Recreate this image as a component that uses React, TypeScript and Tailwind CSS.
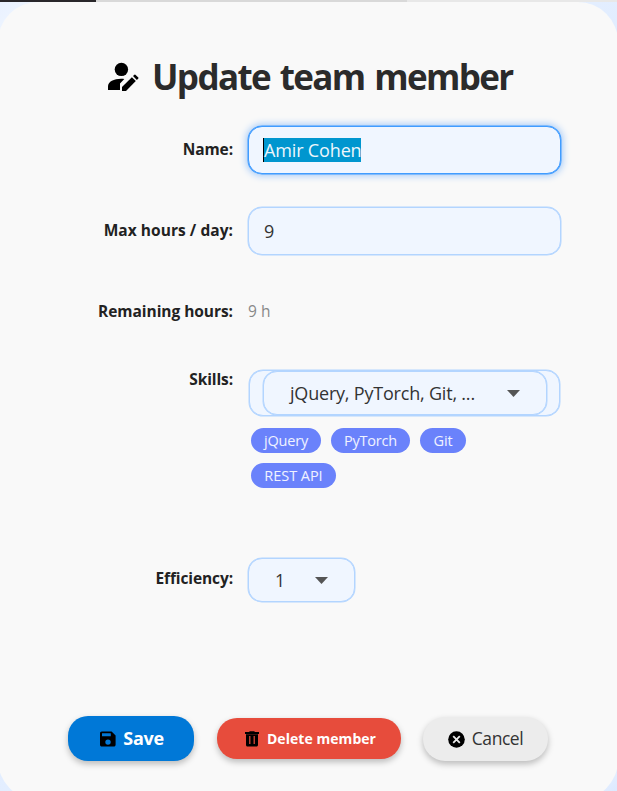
import React from "react";

function UserEditIcon() {
  return (
    <svg className="h-[32px] w-[32px] shrink-0" viewBox="0 0 32 32" fill="#000">
      <circle cx="13.4" cy="8.4" r="6.7" />
      <path d="M0 29v-3.4c0-5.2 6-7.9 13.1-7.9 1.4 0 2.3.1 3.2.3L12 22.4V29z" />
      <path d="M14 30v-4.1l9.9-9.7 3.9 3.9L18 30z" />
      <path d="M25 15.1l1.4-1.4a.7.7 0 0 1 1 0l2.9 2.9a.7.7 0 0 1 0 1l-1.4 1.4z" />
    </svg>
  );
}

function SaveIcon() {
  return (
    <svg className="h-4 w-4 shrink-0" viewBox="0 0 16 16" fill="#000">
      <path fillRule="evenodd" d="M1.8.4h9.8L15.6 4.4v9.4c0 1-.8 1.8-1.8 1.8H1.8C.8 15.6 0 14.8 0 13.8V2.2C0 1.2.8.4 1.8.4zM2 2.3v3h8.8v-3zM8 8.4a2.7 2.7 0 1 0 0 5.4 2.7 2.7 0 0 0 0-5.4z" />
    </svg>
  );
}

function TrashIcon() {
  return (
    <svg className="h-4 w-[14px] shrink-0" viewBox="0 0 14 16" fill="#000">
      <path fillRule="evenodd" d="M0 1h4l.8-.8h4.4L10 1h4v2H0zM1 3.2h12v10.9c0 .8-.7 1.5-1.5 1.5h-9c-.8 0-1.5-.7-1.5-1.5zM4.2 5v8h1.2V5zM8.6 5v8h1.2V5z" />
    </svg>
  );
}

function CancelIcon() {
  return (
    <svg className="h-[17px] w-[17px] shrink-0" viewBox="0 0 17 17">
      <circle cx="8.5" cy="8.5" r="8.3" fill="#000" />
      <path d="M5.2 5.2l6.6 6.6M11.8 5.2l-6.6 6.6" stroke="#ececec" strokeWidth="1.8" />
    </svg>
  );
}

function Caret() {
  return (
    <svg className="h-[7px] w-[13px] shrink-0" viewBox="0 0 13 7" fill="#555">
      <path d="M0 0h13L6.5 7z" />
    </svg>
  );
}

function Label({ children, className }: { children: string; className: string }) {
  return (
    <div className={`flex w-[235px] shrink-0 justify-end whitespace-nowrap text-[15.5px] font-bold text-[#222] ${className}`}>
      <span>{children}</span>
    </div>
  );
}

function Chip({ label, className }: { label: string; className: string }) {
  return (
    <span className={`flex h-[25px] items-center justify-center whitespace-nowrap rounded-full bg-[#6a82fb] text-[14.5px] text-white/90 ${className}`}>
      {label}
    </span>
  );
}

export default function App() {
  return (
    <div className="h-[791px] w-[617px] overflow-hidden bg-[linear-gradient(135deg,#e9f1ff_0%,#f2f8ff_5%,#e0ecff_50%,#f5faff_95%,#dce9ff_100%)] font-['Open_Sans','Noto_Sans',sans-serif]">
      <div className="flex h-[2px]">
        <div className="w-[96px] bg-[#29272b]" />
        <div className="w-[311px] bg-[#d9d9d9]" />
        <div className="flex-1 bg-[#e8e8e8]" />
      </div>
      <main className="-ml-[2px] flex h-[798px] w-[620px] flex-col rounded-[40px] bg-[#f9f9f9]">
        <h1 className="mt-[50px] flex h-[50px] items-center pl-[110px] text-[35px] font-bold text-[#2b2b2b]">
          <UserEditIcon />
          <span className="ml-[12px] whitespace-nowrap tracking-[-1.6px] [word-spacing:2px]">Update team member</span>
        </h1>

        <div className="mt-[24px] flex h-[48px] items-center gap-[15px]">
          <Label className="pb-px tracking-[-0.1px]">Name:</Label>
          <div className="flex h-[48px] w-[313px] items-center rounded-[14px] border border-[#409cff] bg-[#f0f6ff] pl-[14px] shadow-[0_0_0_0.5px_#409cff,0_0_7px_2px_#a6cbf8]">
            <span className="flex h-[24px] items-center whitespace-nowrap border-l border-black bg-[#0096cf] text-[18px] tracking-[-0.15px] text-[#eef7fc]">Amir Cohen</span>
          </div>
        </div>

        <div className="mt-[33px] flex h-[48px] items-center gap-[15px]">
          <Label className="pb-px tracking-[0.05px]">Max hours / day:</Label>
          <div className="flex h-[48px] w-[313px] items-center rounded-[14px] border border-[#b3d5ff] bg-[#f0f6ff] pl-[15px] text-[18px] text-[#333] shadow-[0_0_0_0.5px_#b3d5ff]">9</div>
        </div>

        <div className="mt-[44px] flex h-[26px] items-center gap-[15px]">
          <Label className="pb-px tracking-[-0.05px]">Remaining hours:</Label>
          <span className="text-[15.5px] text-[#888]">9 h</span>
        </div>

        <div className="mt-[45px] flex h-[118px] items-start gap-[15px]">
          <div className="-mt-[2px]">
            <Label className="tracking-[-0.1px]">Skills:</Label>
          </div>
          <div className="ml-px">
            <div className="flex h-[46px] w-[311px] justify-center rounded-[14px] border border-[#b3d5ff] bg-[#f0f6ff] shadow-[0_0_0_0.5px_#b3d5ff]">
              <div className="ml-px flex h-[44px] w-[284px] items-center justify-between rounded-[14px] border border-[#b3d5ff] bg-[#f0f6ff] pl-[26px] pr-[26px] text-[18px] text-[#333] shadow-[0_0_0_0.5px_#b3d5ff]">
                <span className="whitespace-nowrap tracking-[-0.2px]">jQuery, PyTorch, Git, ...</span>
                <Caret />
              </div>
            </div>
            <div className="ml-[2px] mt-[12px] flex w-[240px] flex-wrap gap-[10px]">
              <Chip label="jQuery" className="w-[70px] tracking-[-0.2px]" />
              <Chip label="PyTorch" className="w-[79px] tracking-[-0.2px]" />
              <Chip label="Git" className="w-[46px] tracking-[-0.1px]" />
              <Chip label="REST API" className="w-[85px] tracking-[-0.05px]" />
            </div>
          </div>
        </div>

        <div className="mt-[70px] flex h-[44px] items-center gap-[15px]">
          <Label className="pb-[3px] tracking-[-0.1px]">Efficiency:</Label>
          <div className="flex h-[44px] w-[107px] items-center justify-between rounded-[14px] border border-[#b3d5ff] bg-[#f0f6ff] pl-[26px] pr-[26px] text-[17.5px] text-[#333] shadow-[0_0_0_0.5px_#b3d5ff]">
            <span>1</span>
            <Caret />
          </div>
        </div>

        <div className="mt-[114px] flex h-[45px] items-center pl-[70px]">
          <button className="flex h-[45px] w-[126px] items-center justify-center gap-[7px] rounded-[20px] bg-[#0078d7] pl-[2px] text-[18px] font-bold text-white shadow-[0_3px_6px_rgba(0,0,0,0.25)]">
            <SaveIcon />
            <span className="tracking-[-0.3px]">Save</span>
          </button>
          <button className="ml-[23px] flex h-[41px] w-[184px] items-center justify-center gap-[8px] rounded-[20px] bg-[#e74c3c] pl-[3px] text-[14px] font-bold text-white shadow-[0_3px_6px_rgba(0,0,0,0.25)]">
            <TrashIcon />
            <span className="whitespace-nowrap tracking-[0.05px]">Delete member</span>
          </button>
          <button className="ml-[22px] mt-px flex h-[44px] w-[125px] items-center justify-center gap-[7px] rounded-[22px] bg-[#ececec] text-[17.5px] text-[#333] shadow-[0_3px_6px_rgba(0,0,0,0.25)]">
            <CancelIcon />
            <span className="pb-[2px] tracking-[-0.45px]">Cancel</span>
          </button>
        </div>
      </main>
    </div>
  );
}
